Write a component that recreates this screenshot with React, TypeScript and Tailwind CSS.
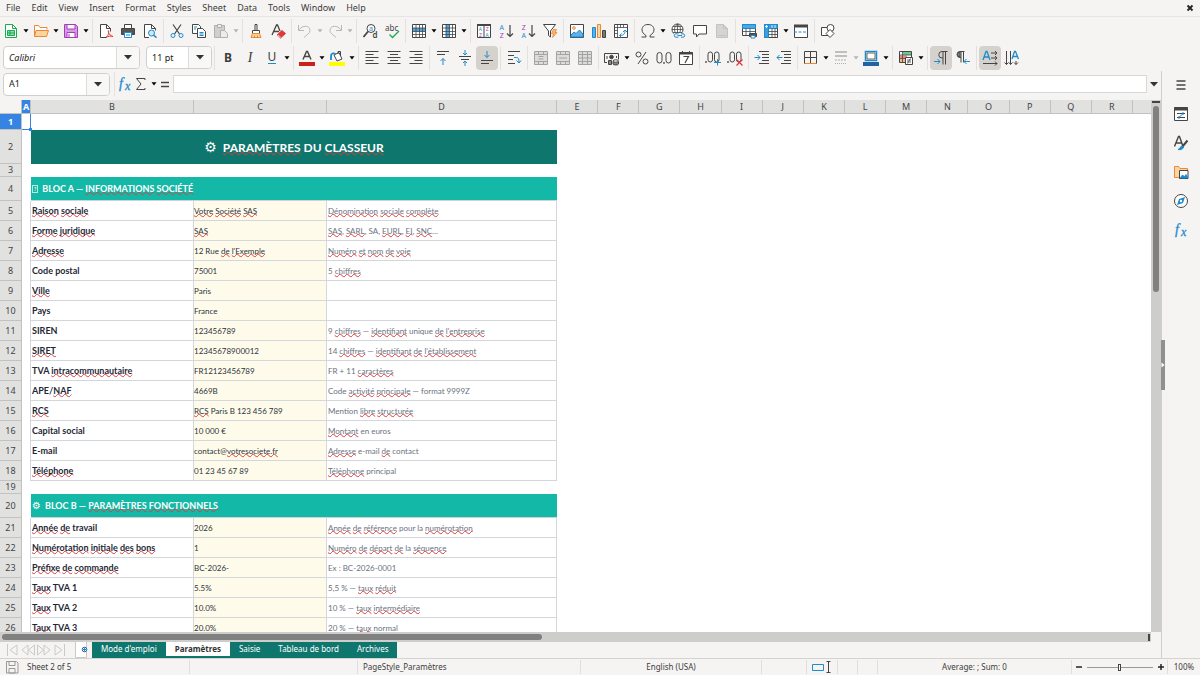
import type { ReactNode } from 'react';

type ToolItem = 'sep' | { id: string; label: string; icon: ReactNode; menu?: boolean; off?: boolean; on?: boolean };
type DataRow = { n: number; label: string; value: string; note: string };

const INK = '#454545';
const BLUE = '#1e8bcd';
const GREEN = '#18ab50';
const ORANGE = '#ed8733';
const PURPLE = '#a33dbd';
const RED = '#e0393e';

const MENUS = ['File', 'Edit', 'View', 'Insert', 'Format', 'Styles', 'Sheet', 'Data', 'Tools', 'Window', 'Help'];
const LETTERS = ['E', 'F', 'G', 'H', 'I', 'J', 'K', 'L', 'M', 'N', 'O', 'P', 'Q', 'R'];
const TABS = ["Mode d'emploi", 'Paramètres', 'Saisie', 'Tableau de bord', 'Archives'];

// words between tildes get the spell-check squiggle
const COMPANY: DataRow[] = [
  { n: 5, label: '~Raison~ ~sociale~', value: '~Votre~ ~Société~ ~SAS~', note: '~Dénomination~ ~sociale~ ~complète~' },
  { n: 6, label: '~Forme~ ~juridique~', value: '~SAS~', note: '~SAS~, ~SARL~, SA, ~EURL~, ~EI~, ~SNC~…' },
  { n: 7, label: '~Adresse~', value: "12 Rue ~de~ ~l'Exemple~", note: '~Numéro~ ~et~ ~nom~ ~de~ ~voie~' },
  { n: 8, label: 'Code postal', value: '75001', note: '5 ~chiffres~' },
  { n: 9, label: '~Ville~', value: 'Paris', note: '' },
  { n: 10, label: 'Pays', value: 'France', note: '' },
  { n: 11, label: 'SIREN', value: '123456789', note: "9 ~chiffres~ — ~identifiant~ unique ~de~ ~l'entreprise~" },
  { n: 12, label: '~SIRET~', value: '12345678900012', note: "14 ~chiffres~ — ~identifiant~ ~de~ ~l'établissement~" },
  { n: 13, label: 'TVA ~intracommunautaire~', value: 'FR12123456789', note: 'FR + 11 ~caractères~' },
  { n: 14, label: 'APE/~NAF~', value: '4669B', note: 'Code ~activité~ ~principale~ — format 9999Z' },
  { n: 15, label: '~RCS~', value: '~RCS~ Paris B 123 456 789', note: 'Mention ~libre~ ~structurée~' },
  { n: 16, label: 'Capital social', value: '10 000 €', note: '~Montant~ en euros' },
  { n: 17, label: 'E-mail', value: 'contact@~votresociete.fr~', note: '~Adresse~ e-mail ~de~ contact' },
  { n: 18, label: '~Téléphone~', value: '01 23 45 67 89', note: '~Téléphone~ principal' },
];

const SETTINGS: DataRow[] = [
  { n: 21, label: '~Année~ ~de~ travail', value: '2026', note: '~Année~ ~de~ ~référence~ pour la ~numérotation~' },
  { n: 22, label: '~Numérotation~ ~initiale~ ~des~ ~bons~', value: '1', note: '~Numéro~ ~de~ ~départ~ ~de~ la ~séquence~' },
  { n: 23, label: '~Préfixe~ ~de~ ~commande~', value: 'BC-2026-', note: 'Ex : BC-2026-0001' },
  { n: 24, label: '~Taux~ TVA 1', value: '5.5%', note: '5,5 % — ~taux~ ~réduit~' },
  { n: 25, label: '~Taux~ TVA 2', value: '10.0%', note: '10 % — ~taux~ ~intermédiaire~' },
  { n: 26, label: '~Taux~ TVA 3', value: '20.0%', note: '20 % — ~taux~ normal' },
];

function Icon({ children, color = INK }: { children: ReactNode; color?: string }) {
  return (
    <svg viewBox="0 0 16 16" className="h-4 w-4 shrink-0" fill="none" stroke={color} strokeWidth={1} aria-hidden="true">
      {children}
    </svg>
  );
}

function Caret() {
  return (
    <svg viewBox="0 0 6 4" className="h-1 w-1.5 shrink-0" aria-hidden="true">
      <path d="M0.5 0.3h5L3 3.6z" fill="currentColor" />
    </svg>
  );
}

function Glyph({ x, y, size, fill = INK, weight, children }: { x: number; y: number; size: number; fill?: string; weight?: number; children: string }) {
  return (
    <text x={x} y={y} fontSize={size} fill={fill} fontWeight={weight} stroke="none" fontFamily="Noto Sans, sans-serif">
      {children}
    </text>
  );
}

function Table({ blue }: { blue: 'row' | 'col' }) {
  return (
    <Icon>
      <path d="M1.5 1.5h13v13h-13z" fill="#fff" />
      {blue === 'row' ? <path d="M2 5h12v3.5H2z" fill="#4aa8e8" stroke="none" /> : <path d="M5 2h3.5v12H5z" fill="#4aa8e8" stroke="none" />}
      <path d="M1.5 5h13M1.5 8.5h13M1.5 11.5h13M5 1.5v13M8.5 1.5v13M11.5 1.5v13" strokeWidth={0.8} />
    </Icon>
  );
}

function Align({ d }: { d: string }) {
  return (
    <Icon>
      <path d={d} />
    </Icon>
  );
}

function Merge({ d }: { d: string }) {
  return (
    <Icon color="#a3a3a3">
      <path d="M1.5 1.5h13v13h-13z" fill="#dcdcdb" />
      <path d="M1.5 4.5h13M1.5 11.5h13M5.5 1.5v3M10.5 1.5v3M5.5 11.5v3M10.5 11.5v3" />
      <path d={d} />
    </Icon>
  );
}

function Fx() {
  return (
    <Icon>
      <text x="2" y="12" fontSize="14" fontStyle="italic" fill={BLUE} stroke={BLUE} strokeWidth={0.3} fontFamily="Liberation Serif, serif">f</text>
      <text x="8" y="13.5" fontSize="12" fontStyle="italic" fill={BLUE} stroke={BLUE} strokeWidth={0.3} fontFamily="Liberation Serif, serif">x</text>
    </Icon>
  );
}

const STANDARD: ToolItem[] = [
  { id: 'new', label: 'New', menu: true, icon: (
    <Icon color={GREEN}>
      <path d="M2.5 1.5h7l4 4v9h-11z" fill="#fff" />
      <path d="M9.5 1.5v4h4" />
      <path d="M4.5 7.5h7v5h-7zM4.5 10h7M7 7.5v5" fill="#8fdcab" />
    </Icon>
  ) },
  { id: 'open', label: 'Open', menu: true, icon: (
    <Icon color={ORANGE}>
      <path d="M1.5 13.5v-11h4l1.5 2h7v2" fill="#fff" />
      <path d="M1.5 13.5l1.5-6h12.5l-2 6z" fill="#fbd5a0" />
    </Icon>
  ) },
  { id: 'save', label: 'Save', menu: true, icon: (
    <Icon color={PURPLE}>
      <path d="M1.5 1.5h11l2 2v11h-13z" fill="#d69be3" />
      <path d="M4 1.5h8V6H4z" fill="#fff" />
      <path d="M4 9.5h8v5H4z" fill="#fff" />
      <path d="M6 11v3.5" />
    </Icon>
  ) },
  'sep',
  { id: 'pdf', label: 'Export as PDF', icon: (
    <Icon>
      <path d="M8 14.5H2.5v-13h6l4 4v3" fill="#fff" />
      <path d="M8.5 1.5v4h4" />
      <path d="M8 14.5c3-2 3-7 2.5-7s-.5 4.500 4.500 6c-2-.8-5-.3-7 1z" stroke={RED} />
    </Icon>
  ) },
  { id: 'print', label: 'Print', icon: (
    <Icon>
      <path d="M4.5 1.5h7v4h-7z" fill="#fff" />
      <path d="M1.5 5.5h13v6h-13z" fill="#555" />
      <path d="M4.5 9.5h7v5h-7z" fill="#fff" stroke={BLUE} />
      <path d="M6 12h4" stroke={BLUE} />
    </Icon>
  ) },
  { id: 'preview', label: 'Print preview', icon: (
    <Icon>
      <path d="M7 14.5H2.5v-13h7l4 4v2" fill="#fff" />
      <path d="M9.5 1.5v4h4" />
      <circle cx="9.5" cy="10" r="3" stroke={BLUE} fill="#cfe8f8" />
      <path d="M11.5 12.2l3 2.5" stroke={BLUE} strokeWidth={1.5} />
    </Icon>
  ) },
  'sep',
  { id: 'cut', label: 'Cut', icon: (
    <Icon>
      <path d="M4 1.5l6.5 9.5M12 1.5L5.5 11" strokeWidth={1.2} />
      <circle cx="4" cy="12.5" r="2" stroke={BLUE} />
      <circle cx="12" cy="12.5" r="2" stroke={BLUE} />
    </Icon>
  ) },
  { id: 'copy', label: 'Copy', icon: (
    <Icon>
      <path d="M1.5 1.5h6l2 2v7h-8z" fill="#fff" />
      <path d="M6.5 5.5h5l3 3v6h-8z" fill="#fff" />
      <path d="M3 4h3M3 6h2M8.5 9.5h4M8.5 11h4M8.5 12.5h4" stroke={BLUE} />
    </Icon>
  ) },
  { id: 'paste', label: 'Paste', menu: true, off: true, icon: (
    <Icon color="#b0b0b0">
      <path d="M1.5 2.5h10v12h-10z" fill="#cfcfce" />
      <path d="M4.5 1.5h4v3h-4z" fill="#ececeb" />
      <path d="M7.5 7.5h4l3 3v4h-7z" fill="#ececeb" />
    </Icon>
  ) },
  'sep',
  { id: 'clone', label: 'Clone formatting', icon: (
    <Icon>
      <path d="M7 1.5h2v6H7z" />
      <path d="M4.5 7.5h7v3h-7z" fill="#fff" />
      <path d="M4.5 10.5h7l1.5 4H3z" fill="#fbd5a0" stroke={ORANGE} />
      <path d="M6.5 14.5v-2M9.5 14.5v-2" stroke={ORANGE} />
    </Icon>
  ) },
  { id: 'clear', label: 'Clear direct formatting', icon: (
    <Icon>
      <path d="M2 12L6.500 2h1l2.500 6M4 8.500h5" strokeWidth={1.3} />
      <path d="M7 12l5-4.500 3.500 3-5 4.500z" fill={RED} stroke={RED} />
      <path d="M7.500 12l3 2.500" stroke="#f5b0b0" strokeWidth={1.5} />
    </Icon>
  ) },
  'sep',
  { id: 'undo', label: 'Undo', menu: true, off: true, icon: (
    <Icon color="#b8b8b7">
      <path d="M1.5 2v5.5H7M2 7c3-5 11-5 11 .5 0 3-3 4-6 7" />
    </Icon>
  ) },
  { id: 'redo', label: 'Redo', menu: true, off: true, icon: (
    <Icon color="#b8b8b7">
      <path d="M14.5 2v5.5H9M14 7c-3-5-11-5-11 .5 0 3 3 4 6 7" />
    </Icon>
  ) },
  'sep',
  { id: 'find', label: 'Find and replace', icon: (
    <Icon>
      <circle cx="9" cy="5.5" r="4" fill="#fff" />
      <path d="M6 8.5L1.5 14" strokeWidth={1.8} />
      <Glyph x={7} y={7.5} size={7} fill={BLUE}>a</Glyph>
      <Glyph x={10.5} y={14.5} size={8} weight={600}>d</Glyph>
    </Icon>
  ) },
  { id: 'spell', label: 'Spelling', icon: (
    <Icon>
      <Glyph x={1} y={8} size={8}>abc</Glyph>
      <path d="M5.5 11.5l3 3 6.5-6.5" stroke={GREEN} strokeWidth={1.3} />
    </Icon>
  ) },
  'sep',
  { id: 'row', label: 'Row', menu: true, icon: <Table blue="row" /> },
  { id: 'col', label: 'Column', menu: true, icon: <Table blue="col" /> },
  'sep',
  { id: 'sort', label: 'Sort', icon: (
    <Icon>
      <path d="M1.5 1.5h13v13h-13z" fill="#fff" />
      <path d="M1 2h14" strokeWidth={2} />
      <path d="M8 2v12.5" />
      <Glyph x={2.8} y={8} size={5} fill={BLUE}>A</Glyph>
      <Glyph x={3} y={13.8} size={5} fill={PURPLE}>Z</Glyph>
      <Glyph x={9.8} y={8} size={5} fill={PURPLE}>Z</Glyph>
      <Glyph x={9.6} y={13.8} size={5} fill={BLUE}>A</Glyph>
    </Icon>
  ) },
  { id: 'asc', label: 'Sort ascending', icon: (
    <Icon>
      <Glyph x={1.5} y={7} size={7} fill={BLUE}>A</Glyph>
      <Glyph x={1.8} y={14.5} size={7} fill={PURPLE}>Z</Glyph>
      <path d="M12 2v11M9 10.5l3 3 3-3" strokeWidth={1.2} />
    </Icon>
  ) },
  { id: 'desc', label: 'Sort descending', icon: (
    <Icon>
      <Glyph x={1.8} y={7} size={7} fill={PURPLE}>Z</Glyph>
      <Glyph x={1.5} y={14.5} size={7} fill={BLUE}>A</Glyph>
      <path d="M12 2v11M9 10.5l3 3 3-3" strokeWidth={1.2} />
    </Icon>
  ) },
  { id: 'filter', label: 'AutoFilter', icon: (
    <Icon>
      <path d="M1.5 1.5h12l-5 6.5v6l-2-1.5V8z" fill="#fff" />
      <path d="M11.5 6.5h3l-1.5 3h2l-4.5 5 1-4H9.5z" fill="#f8b877" stroke={ORANGE} strokeWidth={0.8} />
    </Icon>
  ) },
  'sep',
  { id: 'image', label: 'Insert image', icon: (
    <Icon>
      <path d="M1.5 1.5h13v13h-13z" fill="#fff" />
      <path d="M2 14v-2l3-3 2 1.5L10.5 7l3.5 4v3z" fill="#5eb0e6" stroke={BLUE} />
      <circle cx="5" cy="5" r="1.3" stroke={ORANGE} />
    </Icon>
  ) },
  { id: 'chart', label: 'Insert chart', icon: (
    <Icon>
      <path d="M1.5 4.5h3v10h-3z" fill="#5eb0e6" stroke={BLUE} />
      <path d="M6.5 1.5h3v13h-3z" fill="#fbd5a0" stroke={ORANGE} />
      <path d="M11.5 7.5h3v7h-3z" fill="#777" />
    </Icon>
  ) },
  { id: 'pivot', label: 'Pivot table', icon: (
    <Icon>
      <path d="M1.5 1.5h13v13h-13z" fill="#fff" />
      <path d="M1.5 4.5h13M4.5 1.5v13M7.5 1.5v3M10.5 1.5v3M1.5 7.5h3M1.5 10.5h3" strokeWidth={0.8} />
      <path d="M7 12.5c4 0 5-2 5-5M10 9l2-2 2 2M8.5 10.5l-2 2 2 2" stroke={BLUE} />
    </Icon>
  ) },
  'sep',
  { id: 'symbol', label: 'Special character', menu: true, icon: (
    <Icon>
      <path d="M1.5 14H6v-1.5C3.5 11 2 9 2 6.8 2 3.5 4.6 1.5 8 1.5s6 2 6 5.3c0 2.2-1.5 4.2-4 5.7V14h4.5" />
    </Icon>
  ) },
  { id: 'link', label: 'Hyperlink', icon: (
    <Icon>
      <circle cx="7.5" cy="6.5" r="5.5" fill="#fff" />
      <path d="M2 6.5h11M3 3.5h9M3 9.5h9M7.5 1v11M7.5 1c-4 3-4 8 0 11M7.5 1c4 3 4 8 0 11" strokeWidth={0.8} />
      <path d="M4 10h11v5H4z" fill="#f5f4f2" stroke="none" />
      <path d="M8.5 10.8H6a1.7 1.7 0 000 3.4h2.5M11 10.8h2a1.7 1.7 0 010 3.4h-2M7.5 12.5h4.5" stroke={BLUE} />
    </Icon>
  ) },
  { id: 'comment', label: 'Insert comment', icon: (
    <Icon>
      <path d="M1.5 2.5h13V11H7l-2.500 3v-3h-3z" fill="#fff" />
    </Icon>
  ) },
  { id: 'headers', label: 'Headers and footers', off: true, icon: (
    <Icon color="#c2c2c1">
      <path d="M2.5 1.5h7l4 4v9h-11z" fill="#d4d4d3" />
      <path d="M9.5 1.5v4h4M4.5 12.5h7" />
    </Icon>
  ) },
  'sep',
  { id: 'area', label: 'Define print area', icon: (
    <Icon>
      <path d="M1.5 1.5h13v11h-13z" fill="#fff" />
      <path d="M1.5 1.5h13v4h-13z" fill="#4aa8e8" stroke={BLUE} />
      <path d="M1.5 8.5h13M5 5.5v7M9 5.5v7" strokeWidth={0.8} />
      <path d="M8.5 10.5h7v3h-7z" fill="#555" />
      <path d="M10 12.5h4V15h-4z" fill="#fff" stroke={BLUE} />
    </Icon>
  ) },
  { id: 'freeze', label: 'Freeze rows and columns', menu: true, icon: (
    <Icon>
      <path d="M1.5 1.5h13v13h-13z" fill="#fff" />
      <path d="M1.5 1.5h4v13h-4zM5.5 1.5h9v4h-9z" fill="#3d9de0" stroke={BLUE} />
      <path d="M5.5 8.5h9M5.5 11.5h9M9 5.5v9M12 5.5v9M14.5 5v9.5" strokeWidth={0.8} />
      <path d="M3.5 2v3M2 3.5h3M9 2v3M12 2v3" stroke="#fff" strokeWidth={0.8} />
    </Icon>
  ) },
  { id: 'split', label: 'Split window', icon: (
    <Icon>
      <path d="M1.5 2.5h13v12h-13z" fill="#fff" />
      <path d="M1 3h14" strokeWidth={3} />
      <path d="M1 9h14" stroke={BLUE} strokeDasharray="3 1.5" />
    </Icon>
  ) },
  'sep',
  { id: 'draw', label: 'Show draw functions', icon: (
    <Icon>
      <path d="M1.5 4.5h8v8h-8z" fill="#fff" />
      <circle cx="10.5" cy="5" r="3.5" fill="#fff" />
      <path d="M10 6.5l4 4-4 4-4-4z" fill="#fff" />
    </Icon>
  ) },
];

const FORMATTING: ToolItem[] = [
  { id: 'bold', label: 'Bold', icon: <span className="text-[12px] font-bold">B</span> },
  { id: 'italic', label: 'Italic', icon: <span className="font-['Liberation_Serif',serif] text-[14px] italic">I</span> },
  { id: 'under', label: 'Underline', menu: true, icon: <span className="border-b border-[#1e8bcd] text-[12px] leading-3">U</span> },
  'sep',
  { id: 'color', label: 'Font color', menu: true, icon: (
    <Icon>
      <path d="M4 9.5L7.5 1.5h1L12 9.5M5.5 6.5h5" strokeWidth={1.4} />
      <path d="M0 12h16v4H0z" fill="#c9211e" stroke="none" />
    </Icon>
  ) },
  { id: 'highlight', label: 'Highlighting color', menu: true, icon: (
    <Icon>
      <path d="M5 5l5-2.5 3 6.5-5 2z" fill="#fff" />
      <path d="M9 4V1.5h2.5V6" />
      <path d="M2 10V5.5C2.5 3 5 3 6.5 4" stroke={BLUE} strokeWidth={1.8} />
      <path d="M0 12h16v4H0z" fill="#ffff00" stroke="none" />
    </Icon>
  ) },
  'sep',
  { id: 'left', label: 'Align left', icon: <Align d="M1.5 1.5h13M1.5 4.5h8M1.5 7.5h13M1.5 10.5h8M1.5 13.5h13" /> },
  { id: 'center', label: 'Center horizontally', icon: <Align d="M1.5 1.5h13M4 4.5h8M1.5 7.5h13M4 10.5h8M1.5 13.5h13" /> },
  { id: 'right', label: 'Align right', icon: <Align d="M1.5 1.5h13M6.5 4.5h8M1.5 7.5h13M6.5 10.5h8M1.5 13.5h13" /> },
  'sep',
  { id: 'top', label: 'Align top', icon: (
    <Icon>
      <path d="M2 1.5h12M2 4.5h8" />
      <path d="M8 15V8.5M5.5 11L8 8.5l2.5 2.5" stroke={BLUE} />
    </Icon>
  ) },
  { id: 'middle', label: 'Center vertically', icon: (
    <Icon>
      <path d="M2 6.5h12M4 9.5h8" />
      <path d="M8 0v5M6 3l2 2 2-2M8 16v-5M6 13l2-2 2 2" stroke={BLUE} />
    </Icon>
  ) },
  { id: 'bottom', label: 'Align bottom', on: true, icon: (
    <Icon>
      <path d="M2 10.5h12M2 13.5h8" />
      <path d="M8 1v6.5M5.5 5L8 7.5 10.5 5" stroke={BLUE} />
    </Icon>
  ) },
  'sep',
  { id: 'wrap', label: 'Wrap text', icon: (
    <Icon>
      <path d="M2 1.5h12M2 5.5h6M2 9.5h5M2 13.5h7" />
      <path d="M8 7.5h2.5c2 0 2.5 1.5 2.5 5M10.5 10.5l2.5 2.5 2-2.5" stroke={BLUE} />
    </Icon>
  ) },
  'sep',
  { id: 'merge', label: 'Merge and center cells', off: true, icon: <Merge d="M5.5 6.5h5M5.5 9h5" /> },
  { id: 'mergecells', label: 'Merge cells', off: true, icon: <Merge d="M4 8h8" /> },
  { id: 'unmerge', label: 'Unmerge cells', off: true, icon: <Merge d="M5.5 4.5v7M10.5 4.5v7M1.5 8h13" /> },
  'sep',
  { id: 'currency', label: 'Format as currency', menu: true, icon: (
    <Icon>
      <path d="M3 12.5H0.500v-9h14v6" />
      <circle cx="7.5" cy="7" r="1.8" fill={INK} />
      <path d="M4.5 10.5h3v4h-3z" fill="#888" />
      <path d="M9 11.500v2.500c0 1.300 5.500 1.300 5.500 0v-2.500" fill="#888" />
      <ellipse cx="11.750" cy="11" rx="2.750" ry="1.200" fill="#fff" />
      <path d="M3 6v3M12.500 6v2" />
    </Icon>
  ) },
  { id: 'percent', label: 'Format as percent', icon: (
    <Icon>
      <circle cx="4.5" cy="4.5" r="2.5" />
      <circle cx="11.5" cy="11.5" r="2.5" />
      <path d="M12 2L4 14" />
    </Icon>
  ) },
  { id: 'number', label: 'Format as number', icon: (
    <Icon>
      <rect x="1" y="2.5" width="5" height="10.5" rx="2.5" />
      <rect x="10" y="2.5" width="5" height="10.5" rx="2.5" />
      <path d="M8 12v2" strokeWidth={1.3} />
    </Icon>
  ) },
  { id: 'date', label: 'Format as date', icon: (
    <Icon>
      <path d="M1.5 2.5h13v12h-13z" fill="#fff" />
      <path d="M1 3.5h14" strokeWidth={2} />
      <path d="M4.5 1v2M11.5 1v2" />
      <path d="M5.5 6.5h5L7 13" strokeWidth={1.2} />
    </Icon>
  ) },
  'sep',
  { id: 'adddec', label: 'Add decimal place', icon: (
    <Icon>
      <rect x="3" y="2" width="4.5" height="10" rx="2.2" />
      <rect x="9.5" y="2" width="4.5" height="10" rx="2.2" />
      <path d="M1 11v2" strokeWidth={1.3} />
      <path d="M12.5 9v6.5M9 12.5h7" stroke={BLUE} />
    </Icon>
  ) },
  { id: 'deldec', label: 'Delete decimal place', icon: (
    <Icon>
      <rect x="3" y="2" width="4.5" height="10" rx="2.2" />
      <rect x="9.5" y="2" width="4.5" height="10" rx="2.2" />
      <path d="M1 11v2" strokeWidth={1.3} />
      <path d="M9.5 9.5l6 6M15.5 9.5l-6 6" stroke={RED} strokeWidth={1.3} />
    </Icon>
  ) },
  'sep',
  { id: 'indent', label: 'Increase indent', icon: (
    <Icon>
      <path d="M5 1.5h10M8 4.5h7M8 7.5h7M8 10.5h7M5 13.5h10" />
      <path d="M0.5 7.5H6M3.5 5L6 7.5 3.5 10" stroke={BLUE} />
    </Icon>
  ) },
  { id: 'outdent', label: 'Decrease indent', icon: (
    <Icon>
      <path d="M5 1.5h10M8 4.5h7M8 7.5h7M8 10.5h7M5 13.5h10" />
      <path d="M6.5 7.5H1M3.5 5L1 7.5 3.5 10" stroke={BLUE} />
    </Icon>
  ) },
  'sep',
  { id: 'borders', label: 'Borders', menu: true, icon: (
    <Icon>
      <path d="M1.5 1.5h12v12h-12zM7.5 1.5v12M1.5 7.5h12" />
      <path d="M1.5 13.5h12" stroke={ORANGE} />
    </Icon>
  ) },
  { id: 'style', label: 'Border style', menu: true, off: true, icon: (
    <Icon color="#adadac">
      <path d="M2 2h12M2 6h12" strokeWidth={1.5} />
      <path d="M2 10h12" strokeDasharray="2 1" />
      <path d="M2 13.5h12" strokeDasharray="1 1" />
    </Icon>
  ) },
  { id: 'bcolor', label: 'Border color', menu: true, icon: (
    <Icon>
      <path d="M2.5 1.5h11v9h-11z" fill="#fff" stroke={BLUE} strokeWidth={1.5} />
      <path d="M4 3h8v6H4z" strokeWidth={0.8} />
      <path d="M0 12h16v4H0z" fill="#23619f" stroke="none" />
    </Icon>
  ) },
  'sep',
  { id: 'cond', label: 'Conditional formatting', menu: true, icon: (
    <Icon>
      <path d="M1.5 1.5h12v11h-12z" fill="#fff" />
      <path d="M5 2h8v3H5z" fill="#68c98b" stroke="none" />
      <path d="M2 5.5h7v3H2z" fill="#ee8585" stroke="none" />
      <path d="M2 9h5v3H2z" fill="#f8b877" stroke="none" />
      <path d="M1.5 5h12M1.5 8.5h12M4.5 1.5v11" strokeWidth={0.8} />
      <path d="M7.5 7.5h7v7h-7z" fill="#fff" />
      <path d="M9 10h4M9 12h4M12.5 8.5l-3 5" strokeWidth={0.8} />
    </Icon>
  ) },
  'sep',
  { id: 'ltr', label: 'Left-to-right', on: true, icon: (
    <Icon>
      <path d="M14.5 1.5H9a3 3 0 000 6.5h1M10 1.5v13M12.5 1.5v13" />
      <path d="M1 11.5h6M4.5 9L7 11.5 4.5 14" stroke={BLUE} />
    </Icon>
  ) },
  { id: 'rtl', label: 'Right-to-left', icon: (
    <Icon>
      <path d="M9.5 1.5H5A3 3 0 005 7.5h1M6 1.5v11M8.5 1.5v11" />
      <path d="M5 2a2.5 2.5 0 000 5z" fill="#888" />
      <path d="M15 11.5H9M11.5 9L9 11.5l2.5 2.5" stroke={BLUE} />
    </Icon>
  ) },
  'sep',
  { id: 'horiz', label: 'Text direction left to right', on: true, icon: (
    <Icon>
      <path d="M1 10L4 1.5h1L8 10M2 7h5" stroke={BLUE} strokeWidth={1.3} />
      <path d="M9 3h6M13 1l2 2-2 2M9 8h6M13 6l2 2-2 2M1 13.5h14M13 11.5l2 2-2 2" />
    </Icon>
  ) },
  { id: 'vert', label: 'Text direction top to bottom', icon: (
    <Icon>
      <path d="M8 9L10.500 1.500h1L14.500 9M9 6.500h5" stroke={BLUE} strokeWidth={1.3} />
      <path d="M2.500 1v13.500M0.500 12.500l2 2 2-2M6.500 1v13.500M5 12.500l1.500 2 2-2M12 11v3.500M10 12.500l2 2 2-2" />
    </Icon>
  ) },
];

const SIDEBAR: { label: string; icon: ReactNode }[] = [
  { label: 'Sidebar settings', icon: <Icon><path d="M3.5 4h9M3.5 8h9M3.5 12h9" strokeWidth={1.6} /></Icon> },
  { label: 'Properties', icon: (
    <Icon>
      <path d="M1.5 1.5h13v13h-13z" fill="#fff" />
      <path d="M1 3h14" strokeWidth={3} />
      <path d="M4 7.5h8M4 11.5h8" />
      <path d="M10 6v3M6 10v3M6 11.5l4-4" stroke={BLUE} />
    </Icon>
  ) },
  { label: 'Styles', icon: (
    <Icon>
      <path d="M1.5 11.5L5.500 1.500h1l3.500 10M3 8h6" strokeWidth={1.4} />
      <path d="M14.5 5.5l-5 6" strokeWidth={2} />
      <path d="M5 14.5c2 .5 5 .2 5.5-2.5L9 11c-2 .5-1.5 2.5-4 3.5z" fill={BLUE} stroke={BLUE} />
    </Icon>
  ) },
  { label: 'Gallery', icon: (
    <Icon color={ORANGE}>
      <path d="M1.5 13.5v-11h4l1.5 2h7.5v9z" fill="#fbd5a0" />
      <path d="M6.5 6.5H15v8H6.5z" fill="#fff" stroke={INK} />
      <path d="M7 14l2.5-3 2 1.5 1.5-2 1.5 2V14z" fill={BLUE} stroke={BLUE} strokeWidth={0.8} />
    </Icon>
  ) },
  { label: 'Navigator', icon: (
    <Icon>
      <circle cx="8" cy="8" r="6.5" fill="#fff" />
      <path d="M12 4l-2 6-6 2 2-6z" fill={BLUE} stroke="none" />
      <circle cx="8" cy="8" r="1.2" fill="#fff" stroke="none" />
    </Icon>
  ) },
  { label: 'Functions', icon: <Fx /> },
];

function Separator() {
  return <span className="flex w-[5px] shrink-0 justify-center"><span className="h-6 w-px bg-[#e2e1df]" /></span>;
}

function Tools({ items }: { items: ToolItem[] }) {
  return (
    <>
      {items.map((t, i) => {
        if (t === 'sep') return <Separator key={i} />;
        return (
          <span key={t.id} className="flex shrink-0 items-center">
            <button
              type="button"
              aria-label={t.label}
              disabled={t.off}
              className={`flex h-6 w-[22px] items-center justify-center rounded-sm ${t.on ? 'bg-[#d5d2ce]' : ''}`}
            >
              {t.icon}
            </button>
            {t.menu && (
              <button type="button" aria-label={`${t.label} options`} className={`flex h-6 w-2 items-center justify-center ${t.off ? 'text-[#b5b5b4]' : 'text-black'}`}>
                <Caret />
              </button>
            )}
          </span>
        );
      })}
    </>
  );
}

function Combo({ label, value, box, italic }: { label: string; value: string; box: string; italic?: boolean }) {
  return (
    <div className={`flex h-[23px] shrink-0 overflow-hidden rounded border border-[#d0cfcd] bg-white ${box}`}>
      <input aria-label={label} defaultValue={value} className={`min-w-0 flex-1 px-[5px] text-[9px] text-[#222] outline-none ${italic ? 'italic' : ''}`} />
      <button type="button" aria-label={`${label} list`} className="flex w-[23px] items-center justify-center border-l border-[#dddcda] bg-[#f8f8f7]">
        <svg viewBox="0 0 8 5" className="h-[5px] w-2" aria-hidden="true"><path d="M0 0h8L4 4.5z" fill="#333" /></svg>
      </button>
    </div>
  );
}

function Spelled({ text }: { text: string }) {
  return (
    <>
      {text.split('~').map((part, i) =>
        i % 2 ? (
          <span key={i} className="underline decoration-[#dc3c3c] decoration-wavy decoration-1 -underline-offset-1 [text-decoration-skip-ink:none]">{part}</span>
        ) : part,
      )}
    </>
  );
}

function RowHead({ n, active }: { n: number; active?: boolean }) {
  return (
    <th
      scope="row"
      className={`border-r border-b border-[#c2c2c1] p-0 text-center font-['Noto_Sans',sans-serif] text-[9px] leading-3 ${active ? 'bg-[#3584e4] font-bold text-white' : 'bg-[#e1e1e0] font-normal text-[#444]'}`}
    >
      {n}
    </th>
  );
}

function BlankRow({ n, height }: { n: number; height: string }) {
  return (
    <tr className={height}>
      <RowHead n={n} />
      <td colSpan={19} />
    </tr>
  );
}

function BlockRow({ n, children }: { n: number; children: ReactNode }) {
  return (
    <tr className="h-6">
      <RowHead n={n} />
      <td />
      <td colSpan={3} className="border-b border-[#cfd3d8] bg-[#14b8a6] p-0 px-px text-[9px] leading-3 font-bold text-white">{children}</td>
      <td colSpan={15} />
    </tr>
  );
}

function DataRows({ rows }: { rows: DataRow[] }) {
  return rows.map((r) => (
    <tr key={r.n} className="h-5">
      <RowHead n={r.n} />
      <td className="border-r border-[#d3d6da]" />
      <td className="border-r border-b border-[#d3d6da] p-0 px-px text-[9px] leading-3 font-bold text-[#1f2937]"><Spelled text={r.label} /></td>
      <td className="border-r border-b border-[#d3d6da] bg-[#fffbeb] p-0 text-[8px] leading-3 text-[#2b3440]"><Spelled text={r.value} /></td>
      <td className="border-r border-b border-[#d3d6da] p-0 px-px text-[8px] leading-3 text-[#6b7280]"><Spelled text={r.note} /></td>
      <td colSpan={15} />
    </tr>
  ));
}

function Sheet() {
  const head = 'border-r border-b border-[#c2c2c1] p-0 leading-3';
  return (
    <table className="w-full table-fixed border-separate border-spacing-0 bg-white font-['Lato',sans-serif]">
      <colgroup>
        <col className="w-[22px]" />
        <col className="w-[9px]" />
        <col className="w-[163px]" />
        <col className="w-[133px]" />
        <col className="w-[230px]" />
        {LETTERS.map((l) => <col key={l} />)}
        <col className="w-[18px]" />
      </colgroup>
      <thead>
        <tr className="h-3.5 bg-[#e1e1e0] font-['Noto_Sans',sans-serif] text-[9px] text-[#444] [&>th]:font-normal">
          <td className={`${head} bg-[#f5f4f2]`} />
          <th scope="col" className={`${head} bg-[#3584e4] text-white`}><b>A</b></th>
          {['B', 'C', 'D', ...LETTERS].map((l) => <th key={l} scope="col" className={head}>{l}</th>)}
          <td className="border-b border-[#c2c2c1] p-0" />
        </tr>
      </thead>
      <tbody className="whitespace-nowrap">
        <tr className="h-4">
          <RowHead n={1} active />
          <td className="relative border-r border-b border-[#3584e4] p-0">
            <span className="absolute -right-0.5 -bottom-0.5 size-[3px] bg-[#3584e4]" />
          </td>
          <td colSpan={18} />
        </tr>
        <tr className="h-[34px]">
          <RowHead n={2} />
          <td />
          <td colSpan={3} className="bg-[#0f766e] p-0 text-center text-[12px] leading-4 font-bold text-white">
            <span className="mr-1.5 font-['DejaVu_Sans',sans-serif] text-[14px] font-normal">⚙</span>
            <Spelled text="~PARAMÈTRES~ DU ~CLASSEUR~" />
          </td>
          <td colSpan={15} />
        </tr>
        <BlankRow n={3} height="h-[13px]" />
        <BlockRow n={4}>
          <span className="mr-1 inline-block border border-white/70 px-px align-middle text-[5px] leading-[6px]">?</span>
          <Spelled text="BLOC A — ~INFORMATIONS~ ~SOCIÉTÉ~" />
        </BlockRow>
        <DataRows rows={COMPANY} />
        <BlankRow n={19} height="h-[13px]" />
        <BlockRow n={20}>
          <span className="mr-1 font-['DejaVu_Sans',sans-serif] text-[10px] font-normal">⚙</span>
          <Spelled text="BLOC B — ~PARAMÈTRES~ ~FONCTIONNELS~" />
        </BlockRow>
        <DataRows rows={SETTINGS} />
      </tbody>
    </table>
  );
}

function SheetTabs() {
  const nav = ['M3.5 2v12M13 3L6 8l7 5z', 'M8 3L2 8l6 5zM14.5 3l-6 5 6 5z', 'M8 3l6 5-6 5zM1.5 3l6 5-6 5z', 'M12.5 2v12M3 3l7 5-7 5z'];
  return (
    <div className="flex h-4 shrink-0">
      <div className="flex w-[69px] items-center pl-1">
        {nav.map((d, i) => (
          <button key={i} type="button" disabled aria-label={['First sheet', 'Previous sheet', 'Next sheet', 'Last sheet'][i]}>
            <Icon color="#cacac9"><path d={d} /></Icon>
          </button>
        ))}
      </div>
      <button type="button" aria-label="Add sheet" className="flex w-[23px] items-center justify-center">
        <Icon color="#c8c8c7">
          <path d="M2.5 0v15.500h11V0" fill="#fff" />
          <circle cx="11.5" cy="7.5" r="2.3" fill="#fff" stroke="#23619f" />
          <path d="M11.5 6v3M10 7.5h3" stroke={BLUE} />
        </Icon>
      </button>
      <div role="tablist" className="flex h-4 bg-[#0f766e] text-[8px] text-white">
        {TABS.map((t) => (
          <button
            key={t}
            type="button"
            role="tab"
            aria-selected={t === 'Paramètres'}
            className={`h-3.5 px-[9px] leading-3 ${t === 'Paramètres' ? 'bg-white font-bold text-[#333]' : ''}`}
          >
            {t}
          </button>
        ))}
      </div>
    </div>
  );
}

function StatusBar() {
  const cell = 'flex h-3.5 items-center border-r border-[#e0dfdd]';
  return (
    <footer className="flex h-[17px] shrink-0 items-center border-t border-[#d4d3d1] text-[8px] whitespace-nowrap">
      <div className={`${cell} w-[190px] gap-[7px] pl-1`}>
        <Icon color="#999">
          <path d="M2.5 2.5h10L14 4v10H2.5zM5 2.5h6v4H5zM5 9.5h6V14H5z" />
        </Icon>
        Sheet 2 of 5
      </div>
      <div className={`${cell} w-[168px]`} />
      <div className={`${cell} w-[223px] pl-[5px]`}>PageStyle_Paramètres</div>
      <div className={`${cell} flex-1 justify-center`}>English (USA)</div>
      <div className={`${cell} w-[45px]`} />
      <div className={`${cell} w-[31px] justify-center`}>
        <svg viewBox="0 0 20 12" className="h-3 w-5" fill="none" aria-hidden="true">
          <path d="M0.5 3.5h11v6h-11z" stroke={BLUE} />
          <path d="M14.5 0.5h4M14.5 11.5h4M16.5 0.5v11" stroke="#444" />
        </svg>
      </div>
      <div className={`${cell} w-5`} />
      <div className={`${cell} w-5`} />
      <div className={`${cell} w-[194px] justify-center`}>Average: ; Sum: 0</div>
      <div className="flex h-3.5 w-24 items-center justify-center gap-1 border-r border-[#e0dfdd]">
        <button type="button" aria-label="Zoom out"><svg viewBox="0 0 8 8" className="size-2" aria-hidden="true"><path d="M1 4h6" stroke="#222" strokeWidth={1.5} /></svg></button>
        <input
          type="range"
          aria-label="Zoom"
          defaultValue={50}
          className="h-3 w-[66px] appearance-none bg-transparent [&::-webkit-slider-runnable-track]:h-px [&::-webkit-slider-runnable-track]:bg-[#999] [&::-webkit-slider-thumb]:-mt-[3px] [&::-webkit-slider-thumb]:h-[7px] [&::-webkit-slider-thumb]:w-[3px] [&::-webkit-slider-thumb]:appearance-none [&::-webkit-slider-thumb]:border [&::-webkit-slider-thumb]:border-[#444] [&::-webkit-slider-thumb]:bg-white"
        />
        <button type="button" aria-label="Zoom in"><svg viewBox="0 0 8 8" className="size-2" aria-hidden="true"><path d="M1 4h6M4 1v6" stroke="#222" strokeWidth={1.5} /></svg></button>
      </div>
      <div className="w-8 text-center">100%</div>
    </footer>
  );
}

export default function App() {
  return (
    <div className="flex h-screen flex-col overflow-hidden bg-[#f5f4f2] font-['Noto_Sans',sans-serif] text-[#3d3d3d]">
      <header className="flex h-[17px] shrink-0 items-center border-b border-[#e6e5e3] px-1.5">
        <nav aria-label="Menu bar" className="flex flex-1 gap-[11px] text-[9px] leading-4">
          {MENUS.map((m) => <button key={m} type="button">{m}</button>)}
        </nav>
        <button type="button" aria-label="Close document">
          <svg viewBox="0 0 8 8" className="size-2" aria-hidden="true"><path d="M1.5 1.5l5 5M6.5 1.5l-5 5" stroke="#222" strokeWidth={1.8} /></svg>
        </button>
      </header>

      <div role="toolbar" aria-label="Standard" className="flex h-[27px] shrink-0 items-center">
        <Tools items={STANDARD} />
      </div>
      <div role="toolbar" aria-label="Formatting" className="flex h-[27px] shrink-0 items-center pl-[3px]">
        <Combo label="Font name" value="Calibri" box="mr-1.5 w-[137px]" italic />
        <Combo label="Font size" value="11 pt" box="w-[66px]" />
        <Separator />
        <Tools items={FORMATTING} />
      </div>

      <div className="flex min-h-0 flex-1">
        <main className="flex min-w-0 flex-1 flex-col">
          <div className="flex h-[29px] shrink-0 items-center pb-[3px] pl-[3px]">
            <Combo label="Name box" value="A1" box="mr-0.5 w-[107px]" />
            <Separator />
            <button type="button" aria-label="Function wizard"><Fx /></button>
            <button type="button" aria-label="Select function" className="flex items-center gap-0.5 text-black">
              <Icon><path d="M12 4V2.5H3.5L8 8l-4.500 5.500H12V12" /></Icon>
              <Caret />
            </button>
            <button type="button" aria-label="Formula">
              <Icon><path d="M4 6.5h8M4 10.5h8" strokeWidth={1.5} /></Icon>
            </button>
            <input aria-label="Input line" className="h-[18px] min-w-0 flex-1 border border-[#d8d7d5] bg-white px-1 text-[9px] outline-none" />
            <button type="button" aria-label="Expand formula bar" className="flex w-3.5 justify-center">
              <svg viewBox="0 0 8 5" className="h-[5px] w-2 shrink-0" aria-hidden="true"><path d="M0 0h8L4 4.5z" fill="#333" /></svg>
            </button>
          </div>
          <div className="flex min-h-0 flex-1">
            <div className="min-w-0 flex-1 overflow-hidden"><Sheet /></div>
            <div className="flex w-2.5 flex-col items-center bg-[#cdcdcc]">
              <span className="mt-px mb-[3px] h-0.5 w-2 shrink-0 bg-[#444]" />
              <span className="h-[35%] w-1.5 rounded-full bg-[#7f807f]" />
            </div>
          </div>
          <div className="mr-2.5 flex h-2.5 shrink-0 items-center justify-between bg-[#cdcdcc] pr-px pl-0.5">
            <span className="h-1.5 w-[47%] rounded-full bg-[#7f807f]" />
            <span className="h-[7px] w-0.5 bg-[#444]" />
          </div>
          <SheetTabs />
        </main>
        <aside className="relative flex w-[39px] shrink-0 flex-col items-center gap-[13px] border-l border-[#d0cfcd] pt-1.5">
          {SIDEBAR.map((s) => <button key={s.label} type="button" aria-label={s.label}>{s.icon}</button>)}
          <button type="button" aria-label="Hide sidebar" className="absolute top-1/2 left-0 flex h-[50px] w-1 -translate-x-px -translate-y-1/2 items-center bg-[#8f908f]">
            <svg viewBox="0 0 4 6" className="h-1.5 w-1" aria-hidden="true"><path d="M0.5 0.5L3.5 3l-3 2.500z" fill="#fff" /></svg>
          </button>
        </aside>
      </div>

      <StatusBar />
    </div>
  );
}
